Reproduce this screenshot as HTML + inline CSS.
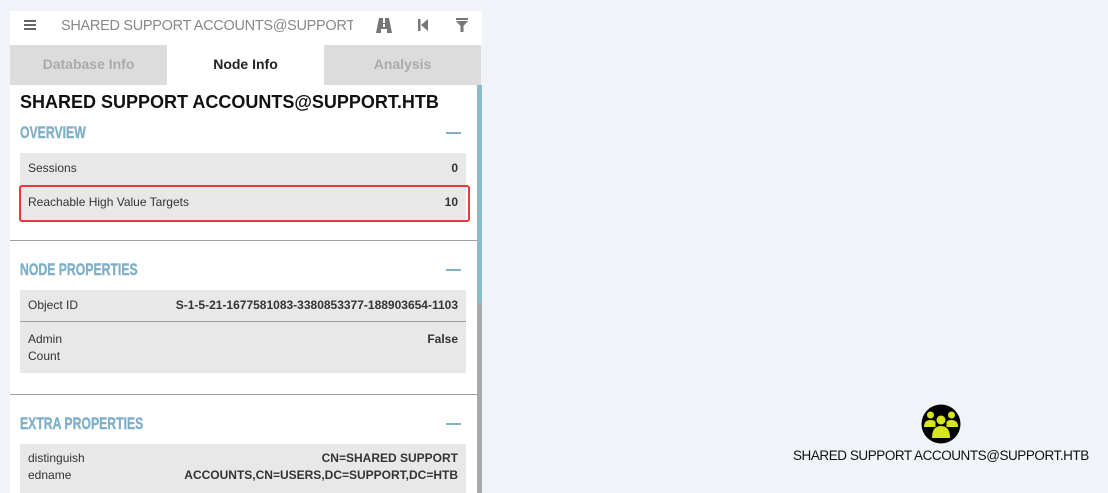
<!DOCTYPE html>
<html><head><style>
*{margin:0;padding:0;box-sizing:border-box}
body{width:1108px;height:493px;background:#f0f3f8;font-family:"Liberation Sans",sans-serif;position:relative;overflow:hidden}
.abs{position:absolute}
.hdr{left:10px;top:11px;width:472px;height:34px;background:#fff}
.tab{top:45px;height:40px;width:157px;text-align:center;line-height:38px;font-weight:bold;font-size:14px;background:#dcdcdc;color:#aaa}
.content{left:10px;top:85px;width:467px;height:408px;background:#fff}
.sec{font-weight:bold;color:#7fb0c8;font-size:17px;left:20px;transform:scaleX(0.72);transform-origin:left;white-space:nowrap;-webkit-text-stroke:0.4px #7fb0c8}
.minus{left:446px;width:15px;height:2px;background:#7fb0c8}
.row{left:20px;width:446px;background:#e8e8e8;font-size:12px;color:#333}
.row .l{position:absolute;left:8px}
.row .r{position:absolute;right:8px;font-weight:bold;text-align:right}
.div{left:10px;width:467px;height:1px;background:#a0a0a0}
</style></head><body>
<div class="abs hdr"></div>
<div class="abs" style="left:24px;top:20px;width:12px;height:2px;background:#666;box-shadow:0 4px 0 #666,0 8px 0 #666"></div>
<div class="abs" style="left:61px;top:18px;font-size:14.5px;letter-spacing:-0.3px;color:#888;width:292px;overflow:hidden;white-space:nowrap">SHARED SUPPORT ACCOUNTS@SUPPORT.HTB</div>
<svg class="abs" style="left:376px;top:18px" width="16" height="15" viewBox="0 0 16 15"><path d="M3 0h4v5h2V0h4l3 15h-5v-4H5v4H0z" fill="#777"/><rect x="7" y="6" width="2" height="3" fill="#fff"/></svg>
<svg class="abs" style="left:418px;top:19px" width="10" height="12" viewBox="0 0 10 12"><rect x="0" y="0" width="2.5" height="12" fill="#777"/><path d="M10 0v12L3 6z" fill="#777"/></svg>
<svg class="abs" style="left:456px;top:18px" width="12" height="14" viewBox="0 0 12 14"><rect x="0" y="0" width="12" height="2" fill="#777"/><path d="M0 3h12L7.5 8v6h-3V8z" fill="#777"/></svg>
<div class="abs tab" style="left:10px">Database Info</div>
<div class="abs tab" style="left:167px;background:#fff;color:#222">Node Info</div>
<div class="abs tab" style="left:324px">Analysis</div>
<div class="abs content"></div>
<div class="abs" style="left:477px;top:85px;width:5px;height:408px;background:#a8a8a8"></div>
<div class="abs" style="left:477px;top:85px;width:5px;height:218px;background:#8bbcc6"></div>
<div class="abs" style="left:20px;top:92px;font-size:18px;font-weight:bold;color:#111;white-space:nowrap">SHARED SUPPORT ACCOUNTS@SUPPORT.HTB</div>
<div class="abs sec" style="top:123px">OVERVIEW</div>
<div class="abs minus" style="top:132px"></div>
<div class="abs row" style="top:153px;height:33px"><span class="l" style="top:8px">Sessions</span><span class="r" style="top:8px">0</span></div>
<div class="abs row" style="top:186px;height:34px"><span class="l" style="top:9px">Reachable High Value Targets</span><span class="r" style="top:9px">10</span></div>
<div class="abs" style="left:19px;top:185px;width:451px;height:37px;border:2.5px solid #e8383d;border-radius:3px"></div>
<div class="abs div" style="top:240px"></div>
<div class="abs sec" style="top:260px">NODE PROPERTIES</div>
<div class="abs minus" style="top:269px"></div>
<div class="abs row" style="top:290px;height:31px"><span class="l" style="top:8px">Object ID</span><span class="r" style="top:8px">S-1-5-21-1677581083-3380853377-188903654-1103</span></div>
<div class="abs" style="left:20px;top:321px;width:446px;height:1px;background:#a0a0a0"></div>
<div class="abs row" style="top:322px;height:51px;line-height:17px"><span class="l" style="top:9px">Admin<br>Count</span><span class="r" style="top:9px">False</span></div>
<div class="abs div" style="top:394px"></div>
<div class="abs sec" style="top:414px">EXTRA PROPERTIES</div>
<div class="abs minus" style="top:423px"></div>
<div class="abs row" style="top:444px;height:49px;line-height:17px"><span class="l" style="top:6px">distinguish<br>edname</span><span class="r" style="top:6px">CN=SHARED SUPPORT<br>ACCOUNTS,CN=USERS,DC=SUPPORT,DC=HTB</span></div>
<svg class="abs" style="left:921px;top:404px" width="40" height="40" viewBox="0 0 40 40"><circle cx="20" cy="20" r="19.5" fill="#000"/><circle cx="9.5" cy="11" r="3.5" fill="#d6e51c"/><circle cx="30.5" cy="11" r="3.5" fill="#d6e51c"/><path d="M3 23q0-7 6.5-7 4 0 5 2v5z" fill="#d6e51c"/><path d="M37 23q0-7-6.5-7-4 0-5 2v5z" fill="#d6e51c"/><circle cx="20" cy="16" r="4.5" fill="#d6e51c"/><path d="M11 34q0-12 9-12t9 12z" fill="#d6e51c"/></svg>
<div class="abs" style="left:793px;top:448px;font-size:13.5px;letter-spacing:-0.45px;color:#111;white-space:nowrap">SHARED SUPPORT ACCOUNTS@SUPPORT.HTB</div>
</body></html>
